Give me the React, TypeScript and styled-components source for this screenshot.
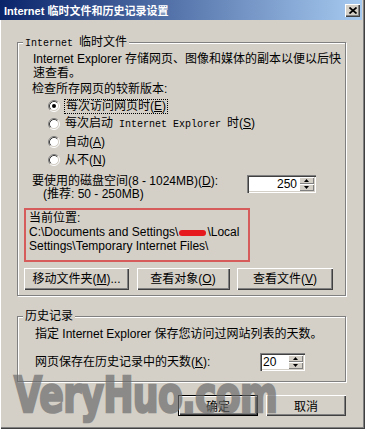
import React from 'react';
import styled, { createGlobalStyle } from 'styled-components';

const GlobalStyle = createGlobalStyle`
  html, body {
    margin: 0;
    padding: 0;
    background: #d4d0c8;
  }
  body {
    font-family: 'Liberation Sans', 'Noto Sans CJK SC', sans-serif;
    font-size: 12px;
    color: #000;
  }
`;

const FACE = '#d4d0c8';

const RadioIcon: React.FC<{ checked?: boolean }> = ({ checked }) => (
  <svg width="12" height="12" viewBox="0 0 12 12">
    <circle cx="6" cy="6" r="4.5" fill="#fff" />
    <path d="M2.11 9.89A5.5 5.5 0 0 1 9.89 2.11" stroke="#808080" fill="none" />
    <path d="M9.89 2.11A5.5 5.5 0 0 1 2.11 9.89" stroke="#fff" fill="none" />
    <path d="M2.82 9.18A4.5 4.5 0 0 1 9.18 2.82" stroke="#404040" fill="none" />
    <path d="M9.18 2.82A4.5 4.5 0 0 1 2.82 9.18" stroke={FACE} fill="none" />
    {checked && <circle cx="6" cy="6" r="2" fill="#000" />}
  </svg>
);

const Arrow: React.FC<{ up?: boolean }> = ({ up }) => (
  <svg width="5" height="3" viewBox="0 0 5 3">
    <path d={up ? 'M2.5 0L5 3H0Z' : 'M0 0H5L2.5 3Z'} fill="#000" />
  </svg>
);

const Spin: React.FC<{ value: string; width: number; align: 'left' | 'right' }> = ({
  value,
  width,
  align,
}) => (
  <Spinner $w={width}>
    <SpinValue $align={align}>{value}</SpinValue>
    <SpinCol>
      <SpinBtn>
        <Arrow up />
      </SpinBtn>
      <SpinBtn>
        <Arrow />
      </SpinBtn>
    </SpinCol>
  </Spinner>
);

const App: React.FC = () => {
  return (
    <>
      <GlobalStyle />
      <Window>
        <TitleBar>
          <TitleText>Internet 临时文件和历史记录设置</TitleText>
          <CloseButton>
            <svg width="8" height="7" viewBox="0 0 8 7">
              <path d="M0.5 0.5L7.5 6.5M7.5 0.5L0.5 6.5" stroke="#000" strokeWidth="1.7" />
            </svg>
          </CloseButton>
        </TitleBar>

        <Body>
          <Group $mt={22} $h={254} $pt={9} $pl={6}>
            <Legend>
              <Mono>Internet </Mono>临时文件
            </Legend>
            <Para>
              Internet Explorer 存储网页、图像和媒体的副本以便以后快
              <br />
              速查看。
            </Para>
            <SubLabel>检查所存网页的较新版本:</SubLabel>
            <RadioList>
              <RadioRow>
                <RadioIcon checked />
                <FocusLabel>
                  每次访问网页时(<u>E</u>)
                </FocusLabel>
              </RadioRow>
              <RadioRow>
                <RadioIcon />
                <span>
                  每次启动<Mono> Internet Explorer </Mono>时(<u>S</u>)
                </span>
              </RadioRow>
              <RadioRow>
                <RadioIcon />
                <span>
                  自动(<u>A</u>)
                </span>
              </RadioRow>
              <RadioRow>
                <RadioIcon />
                <span>
                  从不(<u>N</u>)
                </span>
              </RadioRow>
            </RadioList>

            <DiskRow>
              <DiskText>
                <div>
                  要使用的磁盘空间(8 - 1024MB)(<u>D</u>):
                </div>
                <Hint>(推荐: 50 - 250MB)</Hint>
              </DiskText>
              <Spin value="250" width={69} align="right" />
            </DiskRow>

            <RedBox>
              <div>当前位置:</div>
              <div>
                C:\Documents and Settings\<Redacted />\Local
              </div>
              <div>Settings\Temporary Internet Files\</div>
            </RedBox>

            <ButtonRow>
              <Button $w={105} $h={22}>
                移动文件夹(<u>M</u>)...
              </Button>
              <Button $w={93} $h={22}>
                查看对象(<u>O</u>)
              </Button>
              <Button $w={96} $h={22}>
                查看文件(<u>V</u>)
              </Button>
            </ButtonRow>
          </Group>

          <Group $mt={20} $h={66} $pt={10} $pl={17}>
            <Legend>历史记录</Legend>
            <div>指定 Internet Explorer 保存您访问过网站列表的天数。</div>
            <DaysRow>
              <span>
                网页保存在历史记录中的天数(<u>K</u>):
              </span>
              <Spin value="20" width={45} align="left" />
            </DaysRow>
          </Group>

          <Footer>
            <Button $w={80} $h={21} $default>
              确定
            </Button>
            <Button $w={80} $h={21}>
              取消
            </Button>
          </Footer>
        </Body>

        <Watermark>VeryHuo.com</Watermark>
      </Window>
    </>
  );
};

const Window = styled.div`
  position: relative;
  width: 365px;
  height: 429px;
  box-sizing: border-box;
  background: ${FACE};
  overflow: hidden;
  display: flex;
  flex-direction: column;
  box-shadow: inset 1px 0 0 #fff, inset -1px -1px 0 #404040, inset -2px -2px 0 #808080;
`;

const TitleBar = styled.div`
  height: 20px;
  margin-right: 3px;
  padding: 0 2px 0 4px;
  display: flex;
  align-items: center;
  justify-content: space-between;
  background: linear-gradient(to right, #0a246a, #a6caf0);
`;

const TitleText = styled.span`
  color: #fff;
  font-weight: bold;
  font-size: 11px;
  white-space: nowrap;
`;

const CloseButton = styled.div`
  width: 15px;
  height: 13px;
  box-sizing: border-box;
  display: flex;
  align-items: center;
  justify-content: center;
  background: ${FACE};
  box-shadow: inset 1px 1px 0 #fff, inset -1px -1px 0 #404040, inset -2px -2px 0 #808080;
`;

const Body = styled.div`
  padding: 0 0 0 17px;
  display: flex;
  flex-direction: column;
`;

const Group = styled.div<{ $mt: number; $h: number; $pt: number; $pl: number }>`
  position: relative;
  width: 329px;
  height: ${(p) => p.$h}px;
  margin-top: ${(p) => p.$mt}px;
  padding: ${(p) => p.$pt}px 0 0 ${(p) => p.$pl}px;
  box-sizing: border-box;
  border: 1px solid #808080;
  box-shadow: inset 1px 1px 0 #fff, 1px 1px 0 #fff;
  line-height: 14px;
`;

const Legend = styled.div`
  position: absolute;
  top: -8px;
  left: 5px;
  padding: 0 2px;
  background: ${FACE};
  line-height: 14px;
  white-space: nowrap;
`;

const Mono = styled.span`
  font-family: 'Liberation Mono', 'Noto Sans CJK SC', monospace;
  font-size: 10px;
`;

const Para = styled.div`
  margin-left: 9px;
  line-height: 14px;
  white-space: nowrap;
`;

const SubLabel = styled.div`
  margin: 2px 0 0 8px;
  line-height: 14px;
`;

const RadioList = styled.div`
  margin-top: 1px;
  padding-left: 24px;
  display: flex;
  flex-direction: column;
`;

const RadioRow = styled.div`
  height: 18px;
  display: flex;
  align-items: center;
  gap: 5px;
  white-space: nowrap;
`;

const FocusLabel = styled.span`
  outline: 1px dotted #000;
  outline-offset: 0;
  padding: 0 1px;
  line-height: 13px;
`;

const DiskRow = styled.div`
  margin-top: 6px;
  display: flex;
  justify-content: space-between;
  align-items: flex-start;
  padding-right: 29px;
`;

const DiskText = styled.div`
  margin-left: 8px;
  line-height: 13px;
  white-space: nowrap;
`;

const Hint = styled.div`
  padding-left: 11px;
`;

const Spinner = styled.div<{ $w: number }>`
  width: ${(p) => p.$w}px;
  height: 18px;
  box-sizing: border-box;
  display: flex;
  padding: 2px;
  background: #fff;
  box-shadow: inset 1px 1px 0 #808080, inset 2px 2px 0 #404040, inset -1px -1px 0 #fff,
    inset -2px -2px 0 ${FACE};
`;

const SpinValue = styled.div<{ $align: 'left' | 'right' }>`
  flex: 1;
  text-align: ${(p) => p.$align};
  line-height: 14px;
  padding: 0 2px 0 1px;
`;

const SpinCol = styled.div`
  width: 15px;
  display: flex;
  flex-direction: column;
`;

const SpinBtn = styled.div`
  flex: 1;
  display: flex;
  align-items: center;
  justify-content: center;
  background: ${FACE};
  box-shadow: inset 1px 1px 0 #fff, inset -1px -1px 0 #808080;
`;

const RedBox = styled.div`
  width: 226px;
  margin-top: 7px;
  box-sizing: border-box;
  border: 2px solid #d65c5c;
  padding: 1px 0 7px 3px;
  line-height: 14px;
  white-space: nowrap;
`;

const Redacted = styled.span`
  display: inline-block;
  width: 27px;
  height: 6px;
  margin: 0 1px;
  vertical-align: middle;
  border-radius: 3px;
  background: #e5191e;
`;

const ButtonRow = styled.div`
  width: 309px;
  margin-top: 6px;
  display: flex;
  justify-content: space-between;
`;

const Button = styled.div<{ $w: number; $h: number; $default?: boolean }>`
  width: ${(p) => p.$w}px;
  height: ${(p) => p.$h}px;
  box-sizing: border-box;
  display: flex;
  align-items: center;
  justify-content: center;
  white-space: nowrap;
  background: ${FACE};
  box-shadow: ${(p) =>
    p.$default
      ? 'inset 0 0 0 1px #000, inset 2px 2px 0 #fff, inset -2px -2px 0 #404040, inset -3px -3px 0 #808080'
      : 'inset 1px 1px 0 #fff, inset -1px -1px 0 #404040, inset -2px -2px 0 #808080'};
`;

const DaysRow = styled.div`
  margin-top: 12px;
  height: 18px;
  display: flex;
  align-items: center;
  justify-content: space-between;
  padding-right: 40px;
`;

const Footer = styled.div`
  width: 329px;
  margin-top: 13px;
  display: flex;
  justify-content: flex-end;
  gap: 8px;
`;

const Watermark = styled.div`
  position: absolute;
  left: 14px;
  top: 378px;
  font-family: 'DejaVu Sans', sans-serif;
  font-weight: bold;
  font-size: 49px;
  line-height: 36px;
  white-space: nowrap;
  color: #6a6a6a;
  -webkit-text-stroke: 2.5px #6a6a6a;
  opacity: 0.68;
  letter-spacing: -1px;
  transform: scaleX(0.74);
  transform-origin: left top;
  pointer-events: none;
`;

export default App;
